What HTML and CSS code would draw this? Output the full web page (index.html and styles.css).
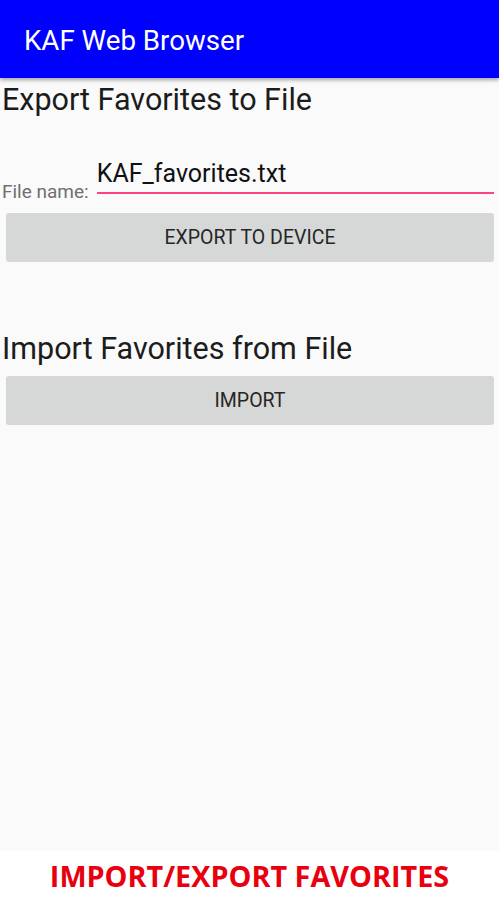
FILE: index.html
```html
<!DOCTYPE html>
<html>
<head>
<meta charset="utf-8">
<link rel="stylesheet" href="styles.css">
</head>
<body>
<div class="screen">
  <header class="appbar"><span class="title">KAF Web Browser</span></header>
  <main class="content">
    <h2 class="heading export-heading">Export Favorites to File</h2>
    <div class="field-row">
      <span class="label">File name:</span>
      <div class="input">KAF_favorites.txt</div>
    </div>
    <button class="btn export-btn">EXPORT TO DEVICE</button>
    <h2 class="heading import-heading">Import Favorites from File</h2>
    <button class="btn import-btn">IMPORT</button>
  </main>
  <footer class="caption">IMPORT/EXPORT FAVORITES</footer>
</div>
</body>
</html>
```
FILE: styles.css
```css
* { box-sizing: border-box; }
html, body { margin: 0; padding: 0; }
body { width: 499px; height: 900px; font-family: Roboto, "Noto Sans", sans-serif; background: #fff; }
.screen { display: flex; flex-direction: column; height: 900px; }
.appbar {
  height: 78px; background: #0000ff; display: flex; align-items: center;
  padding-left: 24px; padding-top: 3px; box-shadow: 0 2px 4px rgba(0,0,0,0.35); position: relative; z-index: 1;
}
.title { color: #fff; font-size: 27.7px; }
.content { flex: 1; background: #fafafa; display: flex; flex-direction: column; padding: 0 5px 0 2px; }
.heading { margin: 0; font-weight: 400; font-size: 30.5px; color: #1c1c1c; line-height: 34px; }
.export-heading { margin-top: 5px; }
.field-row { display: flex; align-items: flex-end; margin-top: 42px; }
.label { font-size: 19px; color: #6f6f6f; line-height: 22px; margin-right: 8px; margin-bottom: -9px; }
.input { flex: 1; font-size: 25px; color: #111; border-bottom: 2px solid #ff4081; padding-bottom: 3px; line-height: 30px; }
.btn {
  margin: 0 0 0 4px; height: 49px; border: none; border-radius: 3px; background: #d6d7d7;
  font-family: Roboto, sans-serif; font-size: 19.5px; color: #262626;
}
.export-btn { margin-top: 19px; }
.import-heading { margin-top: 70px; }
.import-btn { margin-top: 10px; }
.caption {
  height: 49px; background: #fff; color: #e8000f; font-family: "Open Sans", sans-serif;
  font-weight: 700; font-size: 28.8px; display: flex; align-items: center; justify-content: center;
}
```
